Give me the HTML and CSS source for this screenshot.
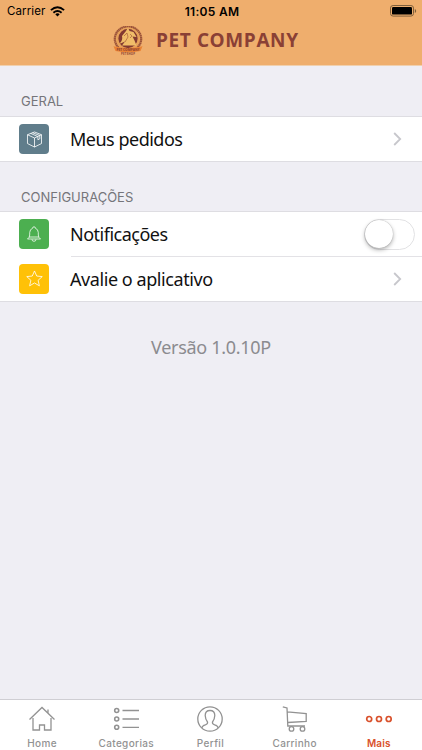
FILE: index.html
```html
<!DOCTYPE html>
<html lang="pt-BR">
<head>
<meta charset="utf-8">
<title>Pet Company</title>
<link rel="stylesheet" href="styles.css">
</head>
<body>
<div class="app">
  <header class="header">
    <div class="status">
      <div class="carrier"><span>Carrier</span>
        <svg width="15" height="11" viewBox="0 0 15 11"><path d="M7.5 10.6 5.3 8.2Q7.5 6.5 9.7 8.2Z"/><g fill="none" stroke="#000" stroke-width="1.9"><path d="M3.4 6.7Q7.5 3.2 11.6 6.7"/><path d="M.9 4.1Q7.5-1.6 14.1 4.1"/></g></svg>
      </div>
      <div class="clock">11:05 AM</div>
      <svg class="battery" width="27" height="12" viewBox="0 0 27 12"><rect x=".5" y=".5" width="23" height="10.6" rx="2.6" fill="none" stroke="#80603c"/><rect x="2" y="2" width="20" height="7.6" rx="1.2"/><path d="M24.8 4v4q1.4-.6 1.4-2t-1.4-2" fill="#80603c"/></svg>
    </div>
    <div class="brand">
      <svg class="logo" width="32" height="30" viewBox="0 0 32 30">
        <path d="M6.500 21.500A13.200 12.400 0 1 1 25.500 21.500" fill="#e9a55d" stroke="#9a5239" stroke-width="2.200" stroke-dasharray="1.6 .3"/>
        <circle cx="16" cy="12.500" r="10.300" fill="#823a31" stroke="#e7a25a" stroke-width="1.300"/>
        <path d="M8 17Q11 14 10 10L14 5l2-3.500L17.500 5l4 1 3 5-4-.500 2 4 2 5H10l3-4-4.500 2Z" fill="#f0bd69"/>
        <path d="m12 10 3-3 1 4-3 5m5-8 2 2-2 2" fill="none" stroke="#a8603c" stroke-width=".7"/>
        <path d="M1.500 20.300Q16 23.500 30.500 20.300L28.500 25Q16 27.500 3.500 25Z" fill="#e98335"/>
        <text x="16" y="24.800" text-anchor="middle" font-size="3.200" textLength="23">PET COMPANY</text>
        <text x="16" y="28.500" text-anchor="middle" font-size="2.800" textLength="14">PETSHOP</text>
      </svg>
      <h1>PET COMPANY</h1>
    </div>
  </header>
  <main>
    <h2>GERAL</h2>
    <section class="list">
      <div class="row">
        <span class="tile blue"><svg width="17" height="17" viewBox="0 0 16 16"><path d="M8 .9 14.600 3.500v8.300L8 15.100 1.400 11.800V3.500ZM1.400 3.500 8 6.600l6.600-3.100M8 6.600v8.500M4.500 2.300l6.700 3v3l1.800-1V4.300L6.200 1.600"/></svg></span>
        <span class="label">Meus pedidos</span>
        <svg class="chevron" width="9" height="14" viewBox="0 0 9 14"><path d="m1.200 1 6 6-6 6"/></svg>
      </div>
    </section>
    <h2 class="next">CONFIGURAÇÕES</h2>
    <section class="list">
      <div class="row">
        <span class="tile green"><svg width="16" height="16" viewBox="0 0 16 16"><path d="M1.500 13q2.200-1.500 2.200-4V6.500Q4 3 6.500 2.400 6.500.8 8 .8t1.500 1.600Q12 3 12.300 6.500V9q0 2.500 2.200 4ZM3.100 11h9.800M6 13.300q0 2 2 2t2-2"/></svg></span>
        <span class="label l2">Notificações</span>
        <span class="switch"><i></i></span>
      </div>
      <div class="row divided">
        <span class="tile yellow"><svg width="17" height="17" viewBox="0 0 16 16"><path d="m8 .9 2.100 4.800 5.200.5-3.900 3.500 1.200 5.200L8 12.200l-4.600 2.700 1.200-5.200L.7 6.200l5.200-.5Z"/></svg></span>
        <span class="label l3">Avalie o aplicativo</span>
        <svg class="chevron" width="9" height="14" viewBox="0 0 9 14"><path d="m1.200 1 6 6-6 6"/></svg>
      </div>
    </section>
    <p class="version">Versão 1.0.10P</p>
  </main>
  <nav class="tabs">
    <a><svg width="28" height="28" viewBox="0 0 28 28"><path d="M1.500 14.500 14 2.500l12.500 12M5 13v12h6.500v-5h5v5H23V13M20 8.500V4.500"/></svg><span>Home</span></a>
    <a><svg width="28" height="28" viewBox="0 0 28 28"><g stroke-width="1.600"><circle cx="4.700" cy="5.500" r="2"/><circle cx="4.700" cy="14" r="2"/><circle cx="4.700" cy="22.300" r="2"/></g><path d="M10.500 5.500H27M10.500 14H27M10.500 22.300H27"/></svg><span>Categorias</span></a>
    <a><svg width="28" height="28" viewBox="0 0 28 28"><circle cx="14" cy="14" r="12.200"/><path d="M5.800 23Q6.200 20.600 9.300 19.800 12 19 11.500 17 9.400 14.500 9.200 10.500 9.200 5.500 14 5.500t4.800 5q-.2 4-2.300 6.500-.5 2 2.200 2.800 3.100.8 3.500 3.200"/></svg><span>Perfil</span></a>
    <a><svg width="28" height="28" viewBox="0 0 28 28"><path d="M1.800 1.800 6 3l.8 18H24M6.300 6.800 25.200 8.500v8L6.700 17.500"/><circle cx="10.500" cy="23.900" r="2.300"/><circle cx="21.500" cy="23.900" r="2.300"/></svg><span>Carrinho</span></a>
    <a class="active"><svg width="28" height="28" viewBox="0 0 28 28"><circle cx="4.200" cy="14" r="2.500"/><circle cx="14" cy="14" r="2.500"/><circle cx="23.700" cy="14" r="2.500"/></svg><span>Mais</span></a>
  </nav>
</div>
</body>
</html>
```
FILE: styles.css
```css
* { box-sizing: border-box; }
body { margin: 0; font-family: Inter, sans-serif; background: #efeef4; }
svg { display: block; flex: none; }
.app { width: 422px; height: 750px; display: flex; flex-direction: column; overflow: hidden; }
.header { height: 66px; background: #efae6d; border-bottom: 1px solid #f0d0ae; }
.status { height: 22px; display: grid; grid-template-columns: 1fr auto 1fr; align-items: center; padding: 0 5px 0 7px; }
.carrier { display: flex; align-items: center; gap: 5px; font-size: 11.500px; letter-spacing: .1px; }
.clock { font-size: 12px; font-weight: 600; letter-spacing: .3px; }
.battery { justify-self: end; }
.brand { height: 43px; display: flex; align-items: center; padding: 0 0 7px 112px; }
.brand h1 { margin: 0 0 0 12px; font: 700 19px/24px "Open Sans", sans-serif; letter-spacing: .6px; color: #8a4035; white-space: nowrap; }
.logo { font-family: "Open Sans", sans-serif; font-weight: 700; margin-top: 2px; }
.logo text { fill: #8c3f30; }
main { flex: 1; }
h2 { margin: 0; height: 50px; padding: 27px 0 0 21px; font-size: 13px; line-height: 16px; font-weight: 400; color: #75757a; }
h2.next { height: 49px; }
.list { background: #fff; border-top: 1px solid #dedde2; border-bottom: 1px solid #dedde2; }
.row { height: 44px; display: flex; align-items: center; padding: 0 20px 0 19px; position: relative; }
.row.divided { height: 45px; }
.row.divided::before { content: ""; position: absolute; top: 0; left: 71px; right: 0; height: 1px; background: #e3e2e6; }
.tile { width: 30px; height: 30px; border-radius: 4px; display: grid; place-items: center; flex: none; }
.tile svg { fill: none; stroke: rgba(255, 255, 255, .85); stroke-width: .9; stroke-linejoin: round; }
.blue { background: #607d8b; }
.green { background: #4caf50; }
.yellow { background: #ffc107; }
.label { margin-left: 21px; padding-top: 1px; font: 400 18px/25px "Noto Sans", sans-serif; letter-spacing: -.5px; color: #111; white-space: nowrap; }
.label.l3 { letter-spacing: -.43px; }
.chevron { margin-left: auto; fill: none; stroke: #c7c7cc; stroke-width: 1.8; }
.switch { margin-left: auto; margin-right: -13px; width: 51px; height: 31px; border: 1.5px solid #e2e2e4; border-radius: 16px; }
.switch i { display: block; width: 28px; height: 28px; border-radius: 50%; background: #fff; box-shadow: 0 2px 4px rgba(0, 0, 0, .3), 0 0 1px rgba(0, 0, 0, .35); }
.version { margin: 33px 0 0; text-align: center; font: 400 18px/25px "Noto Sans", sans-serif; letter-spacing: -.3px; color: #8b8b8f; }
.tabs { height: 51px; border-top: 1px solid #cfced3; background: #fff; display: grid; grid-template-columns: repeat(5, 84.200px); }
.tabs a { display: flex; flex-direction: column; align-items: center; padding-top: 5px; color: #929292; font-size: 10px; line-height: 12px; font-weight: 500; letter-spacing: .35px; }
.tabs svg { fill: none; stroke: #929292; stroke-width: 1.3; }
.tabs span { margin-top: 4px; }
.tabs .active { color: #d9512c; font-weight: 600; letter-spacing: .15px; }
.tabs .active svg { stroke: #d9512c; stroke-width: 1.7; }
```
